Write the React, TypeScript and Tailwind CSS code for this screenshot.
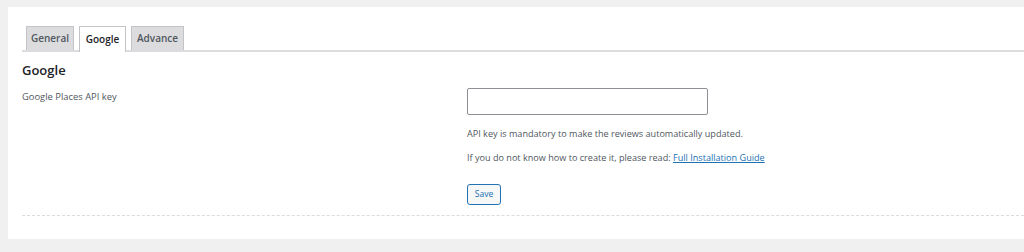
export default function App() {
  return (
    <div className="w-[1024px] h-[252px] bg-[#f0f0f1] pt-[7px] pl-[8px] font-['Open_Sans',sans-serif] text-[#50575e] overflow-hidden">
      <div className="bg-white h-[232px] pt-[19px] pl-[14px]">
        {/* tabs */}
        <div className="flex items-end gap-[5px] pl-[4px] border-b-2 border-[#dcdcde] h-[26px]">
          <div className="h-[24px] w-[48px] flex items-center justify-center bg-[#dcdcde] border border-b-0 border-[#c3c4c7] text-[10px] font-semibold text-[#50575e]">
            General
          </div>
          <div className="h-[26px] w-[47px] -mb-[2px] flex items-center justify-center bg-white border border-b-0 border-[#c3c4c7] text-[10px] font-semibold text-[#1d2327]">
            Google
          </div>
          <div className="h-[24px] w-[53px] flex items-center justify-center bg-[#dcdcde] border border-b-0 border-[#c3c4c7] text-[10px] font-semibold text-[#50575e]">
            Advance
          </div>
        </div>

        <h2 className="mt-[9px] text-[13px] font-semibold text-[#1d2327] leading-[18px]">Google</h2>

        <div className="flex mt-[9px]">
          <div className="w-[445px] pt-[2px] text-[9.4px] leading-[14px]">Google Places API key</div>
          <div className="flex flex-col">
            <input
              type="text"
              className="w-[241px] h-[27px] border border-[#8c8f94] rounded-[2px] bg-white"
            />
            <p className="mt-[12px] text-[9.1px] leading-[14px]">API key is mandatory to make the reviews automatically updated.</p>
            <p className="mt-[10px] text-[9.1px] leading-[14px]">
              If you do not know how to create it, please read:{' '}
              <a href="#" className="text-[#2271b1] underline">Full Installation Guide</a>
            </p>
            <button className="mt-[19px] w-[34px] h-[21px] border border-[#2271b1] rounded-[3px] bg-[#f6f7f7] text-[#2271b1] text-[8.5px] flex items-center justify-center">
              Save
            </button>
          </div>
        </div>

        <div className="mt-[10px] border-t border-dashed border-[#dcdcde]" />
      </div>
    </div>
  );
}
